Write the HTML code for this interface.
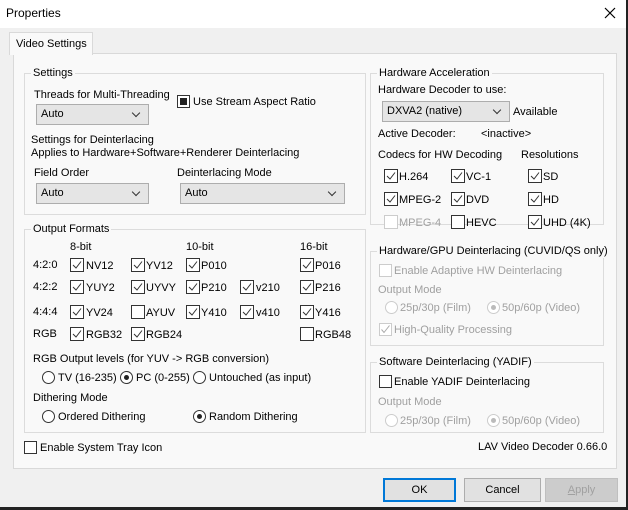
<!DOCTYPE html>
<html><head><meta charset="utf-8"><style>
*{box-sizing:border-box;margin:0;padding:0}
body{width:628px;height:510px;background:#222;font-family:"Liberation Sans",sans-serif;font-size:11px;color:#000;position:relative;overflow:hidden}
.win{position:absolute;left:0;top:0;width:626px;height:507px;background:#f0f0f0}
.title{position:absolute;left:0;top:0;width:626px;height:28px;background:#fff}
.t{position:absolute;white-space:nowrap;line-height:14px;font-size:11px}
.g{color:#a0a0a0}
.panel{position:absolute;left:13px;top:53px;width:604px;height:416px;background:#f9f9f9;border:1px solid #d9d9d9}
.tab{position:absolute;left:9px;top:32px;width:84px;height:23px;background:#f9f9f9;border:1px solid #d9d9d9;border-bottom:none}
.grp{position:absolute;border:1px solid #dcdcdc}
.lbl{position:absolute;top:-8px;left:6px;background:#f9f9f9;padding:0 2px;line-height:14px;white-space:nowrap}
.cmb{position:absolute;height:21px;background:#e5e5e5;border:1px solid #adadad;line-height:19px;padding-left:4px}
.cmb:after{content:"";position:absolute;right:9px;top:5px;width:5px;height:5px;border-right:1px solid #333;border-bottom:1px solid #333;transform:rotate(45deg)}
.cb{position:absolute;width:13px;height:13px;border:1px solid #333;background:#fff}
.cb.dis{border-color:#ccc}
.rd{position:absolute;width:13px;height:13px;border:1px solid #333;border-radius:50%;background:#fff}
.rd.dis{border-color:#ccc}
.rd.on:after{content:"";position:absolute;left:3px;top:3px;width:5px;height:5px;border-radius:50%;background:#222}
.rd.dis.on:after{background:#bbb}
.btn{position:absolute;height:24px;background:#e1e1e1;border:1px solid #adadad;text-align:center;line-height:22px}
</style></head><body>
<div class="win">
<div class="title"></div>
<div class="t" style="left:6px;top:6px;font-size:12px">Properties</div>
<svg style="position:absolute;left:604px;top:7px" width="12" height="12"><path d="M1 1L11 11M11 1L1 11" stroke="#000" stroke-width="1.2"/></svg>
<div class="panel"></div>
<div class="tab"></div>
<div class="t" style="left:16px;top:37px">Video Settings</div>

<div class="grp" style="left:24px;top:73px;width:342px;height:142px"><div class="lbl">Settings</div></div>
<div class="t" style="left:34px;top:88px">Threads for Multi-Threading</div>
<div class="cmb" style="left:36px;top:104px;width:113px">Auto</div>
<div class="cb" style="left:177px;top:95px"><div style="position:absolute;left:2px;top:2px;width:7px;height:7px;background:#222"></div></div>
<div class="t" style="left:193px;top:95px">Use Stream Aspect Ratio</div>
<div class="t" style="left:31px;top:133px">Settings for Deinterlacing</div>
<div class="t" style="left:31px;top:146px">Applies to Hardware+Software+Renderer Deinterlacing</div>
<div class="t" style="left:34px;top:166px">Field Order</div>
<div class="cmb" style="left:36px;top:183px;width:113px">Auto</div>
<div class="t" style="left:177px;top:166px">Deinterlacing Mode</div>
<div class="cmb" style="left:180px;top:183px;width:165px">Auto</div>

<div class="grp" style="left:24px;top:229px;width:342px;height:204px"><div class="lbl">Output Formats</div></div>
<div class="t" style="left:70px;top:240px">8-bit</div>
<div class="t" style="left:186px;top:240px">10-bit</div>
<div class="t" style="left:300px;top:240px">16-bit</div>
<div class="t" style="left:33px;top:258px">4:2:0</div>
<div class="t" style="left:33px;top:280px">4:2:2</div>
<div class="t" style="left:33px;top:305px">4:4:4</div>
<div class="t" style="left:33px;top:327px">RGB</div>

<div class="t" style="left:33px;top:352px">RGB Output levels (for YUV -&gt; RGB conversion)</div>
<div class="rd" style="left:42px;top:371px"></div><div class="t" style="left:58px;top:371px">TV (16-235)</div>
<div class="rd on" style="left:120px;top:371px"></div><div class="t" style="left:136px;top:371px">PC (0-255)</div>
<div class="rd" style="left:193px;top:371px"></div><div class="t" style="left:209px;top:371px">Untouched (as input)</div>
<div class="t" style="left:33px;top:391px">Dithering Mode</div>
<div class="rd" style="left:42px;top:410px"></div><div class="t" style="left:58px;top:410px">Ordered Dithering</div>
<div class="rd on" style="left:193px;top:410px"></div><div class="t" style="left:209px;top:410px">Random Dithering</div>

<div class="cb" style="left:24px;top:441px"></div><div class="t" style="left:40px;top:441px">Enable System Tray Icon</div>

<div class="grp" style="left:370px;top:73px;width:234px;height:152px"><div class="lbl">Hardware Acceleration</div></div>
<div class="t" style="left:378px;top:83px">Hardware Decoder to use:</div>
<div class="cmb" style="left:382px;top:101px;width:128px">DXVA2 (native)</div>
<div class="t" style="left:513px;top:105px">Available</div>
<div class="t" style="left:378px;top:127px">Active Decoder:</div>
<div class="t" style="left:481px;top:127px">&lt;inactive&gt;</div>
<div class="t" style="left:378px;top:148px">Codecs for HW Decoding</div>
<div class="t" style="left:521px;top:148px">Resolutions</div>

<div class="grp" style="left:370px;top:251px;width:234px;height:95px"><div class="lbl">Hardware/GPU Deinterlacing (CUVID/QS only)</div></div>
<div class="cb dis" style="left:379px;top:264px"></div><div class="t g" style="left:394px;top:264px">Enable Adaptive HW Deinterlacing</div>
<div class="t g" style="left:378px;top:283px">Output Mode</div>
<div class="rd dis" style="left:385px;top:301px"></div><div class="t g" style="left:400px;top:301px">25p/30p (Film)</div>
<div class="rd dis on" style="left:487px;top:301px"></div><div class="t g" style="left:502px;top:301px">50p/60p (Video)</div>
<div class="cb dis" style="left:379px;top:323px"><svg width="11" height="11" style="position:absolute;left:0;top:0"><path d="M1.5 5.5L4 8.5L9.5 1.5" fill="none" stroke="#aaa" stroke-width="1"/></svg></div><div class="t g" style="left:394px;top:323px">High-Quality Processing</div>

<div class="grp" style="left:370px;top:362px;width:234px;height:71px"><div class="lbl">Software Deinterlacing (YADIF)</div></div>
<div class="cb" style="left:379px;top:375px"></div><div class="t" style="left:394px;top:375px">Enable YADIF Deinterlacing</div>
<div class="t g" style="left:378px;top:395px">Output Mode</div>
<div class="rd dis" style="left:385px;top:414px"></div><div class="t g" style="left:400px;top:414px">25p/30p (Film)</div>
<div class="rd dis on" style="left:487px;top:414px"></div><div class="t g" style="left:502px;top:414px">50p/60p (Video)</div>

<div class="t" style="left:478px;top:440px;width:125px;text-align:right">LAV Video Decoder 0.66.0</div>

<div class="btn" style="left:383px;top:478px;width:73px;border:2px solid #0078d7;line-height:20px">OK</div>
<div class="btn" style="left:464px;top:478px;width:77px">Cancel</div>
<div class="btn" style="left:545px;top:478px;width:73px;color:#a0a0a0;background:#ccc;border-color:#bfbfbf"><u>A</u>pply</div>
</div>

<svg width="628" height="510" style="position:absolute;left:0;top:0;pointer-events:none">
<defs><g id="c"><rect x="0.5" y="0.5" width="13" height="13" fill="#fff" stroke="#333"/><path d="M3 7L6 10L11 3.5" fill="none" stroke="#333" stroke-width="1"/></g>
<g id="e"><rect x="0.5" y="0.5" width="13" height="13" fill="#fff" stroke="#333"/></g></defs>
<g font-family="Liberation Sans, sans-serif" font-size="11">
<use href="#c" x="70" y="258"/><text x="86" y="269">NV12</text>
<use href="#c" x="131" y="258"/><text x="146" y="269">YV12</text>
<use href="#c" x="186" y="258"/><text x="201" y="269">P010</text>
<use href="#c" x="300" y="258"/><text x="315" y="269">P016</text>
<use href="#c" x="70" y="280"/><text x="86" y="291">YUY2</text>
<use href="#c" x="131" y="280"/><text x="146" y="291">UYVY</text>
<use href="#c" x="186" y="280"/><text x="201" y="291">P210</text>
<use href="#c" x="240" y="280"/><text x="256" y="291">v210</text>
<use href="#c" x="300" y="280"/><text x="315" y="291">P216</text>
<use href="#c" x="70" y="305"/><text x="86" y="316">YV24</text>
<use href="#e" x="131" y="305"/><text x="146" y="316">AYUV</text>
<use href="#c" x="186" y="305"/><text x="201" y="316">Y410</text>
<use href="#c" x="240" y="305"/><text x="256" y="316">v410</text>
<use href="#c" x="300" y="305"/><text x="315" y="316">Y416</text>
<use href="#c" x="70" y="327"/><text x="86" y="338">RGB32</text>
<use href="#c" x="131" y="327"/><text x="146" y="338">RGB24</text>
<use href="#e" x="300" y="327"/><text x="315" y="338">RGB48</text>
<use href="#c" x="384" y="169"/><text x="399" y="180">H.264</text>
<use href="#c" x="451" y="169"/><text x="466" y="180">VC-1</text>
<use href="#c" x="528" y="169"/><text x="543" y="180">SD</text>
<use href="#c" x="384" y="192"/><text x="399" y="203">MPEG-2</text>
<use href="#c" x="451" y="192"/><text x="466" y="203">DVD</text>
<use href="#c" x="528" y="192"/><text x="543" y="203">HD</text>
<rect x="384.5" y="215.5" width="13" height="13" fill="#fff" stroke="#ccc"/><text x="399" y="226" fill="#a0a0a0">MPEG-4</text>
<use href="#e" x="451" y="215"/><text x="466" y="226">HEVC</text>
<use href="#c" x="528" y="215"/><text x="543" y="226">UHD (4K)</text>
</g></svg>
</body></html>
